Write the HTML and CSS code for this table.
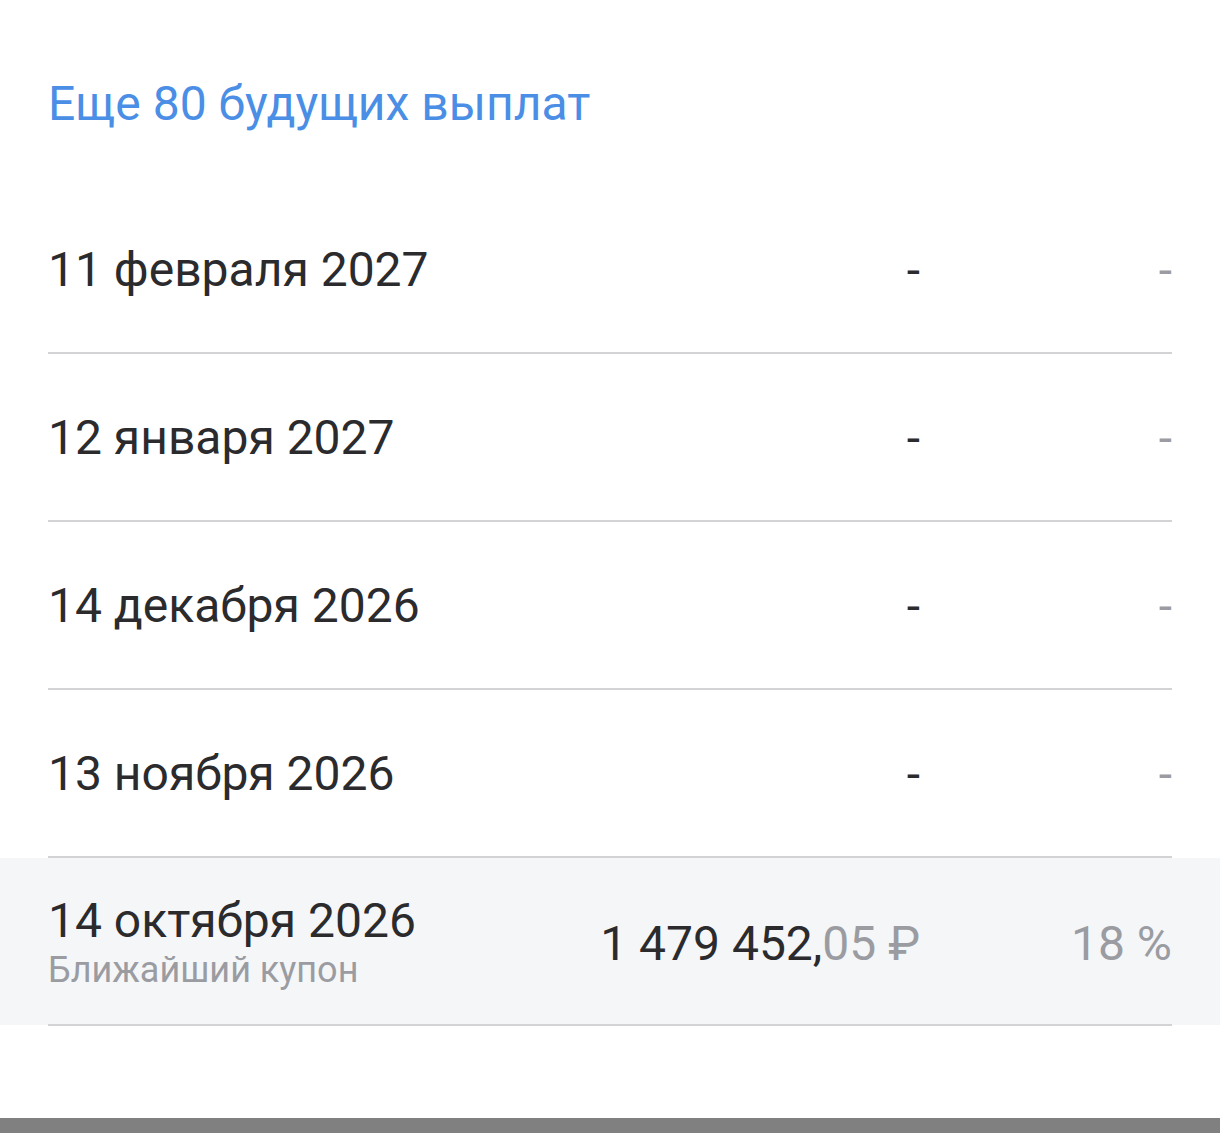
FILE: index.html
```html
<!DOCTYPE html>
<html lang="ru">
<head>
  <meta charset="UTF-8" />
  <meta name="viewport" content="width=device-width, initial-scale=1" />
  <title>Выплаты</title>
  <link rel="stylesheet" href="styles.css">
</head>
<body>

  <div class="payments">
    <a class="more-link" href="#">Еще 80 будущих выплат</a>

    <div class="row">
      <div class="date">11 февраля 2027</div>
      <div class="amount">-</div>
      <div class="rate">-</div>
    </div>
    <div class="row">
      <div class="date">12 января 2027</div>
      <div class="amount">-</div>
      <div class="rate">-</div>
    </div>
    <div class="row">
      <div class="date">14 декабря 2026</div>
      <div class="amount">-</div>
      <div class="rate">-</div>
    </div>
    <div class="row">
      <div class="date">13 ноября 2026</div>
      <div class="amount">-</div>
      <div class="rate">-</div>
    </div>
    <div class="row current">
      <div class="date">
        14 октября 2026
        <div class="date-note">Ближайший купон</div>
      </div>
      <div class="amount">1 479 452,<span class="cents">05 ₽</span></div>
      <div class="rate">18 %</div>
    </div>
  </div>

  <div class="bottom-bar"></div>

</body>
</html>
```

FILE: styles.css
```css
body {
  margin: 0;
  font-family: Roboto, 'Noto Sans', sans-serif;
  background: #ffffff;
  color: #2b2b2e;
  height: 1133px;
  display: flex;
  flex-direction: column;
  overflow: hidden;
}

.payments {
  flex: 1;
  padding-top: 78px;
}

.more-link {
  display: block;
  padding: 0 48px;
  font-size: 48px;
  line-height: 52px;
  color: #4a8ee6;
  text-decoration: none;
  margin-bottom: 56px;
}

.row {
  display: flex;
  align-items: center;
  height: 164px;
  padding-top: 2px;
  margin: 0 48px;
  border-bottom: 2px solid #d3d3d5;
  font-size: 48px;
}

.row.current {
  background: #f5f6f8;
  margin: 0;
  padding: 0 48px;
  height: 167px;
  position: relative;
  border-bottom: none;
}

.row.current::after {
  content: "";
  position: absolute;
  left: 48px;
  right: 48px;
  bottom: -1px;
  border-bottom: 2px solid #d3d3d5;
}

.date {
  flex: 1;
  line-height: 56px;
}

.date-note {
  font-size: 36px;
  line-height: 42px;
  color: #9a9ca2;
}

.amount {
  text-align: right;
  white-space: nowrap;
}

.current .amount,
.current .rate {
  padding-top: 4px;
}

.cents {
  color: #9a9ca2;
}

.rate {
  width: 252px;
  text-align: right;
  color: #9a9ca2;
}

.bottom-bar {
  height: 15px;
  background: #808080;
}
```
